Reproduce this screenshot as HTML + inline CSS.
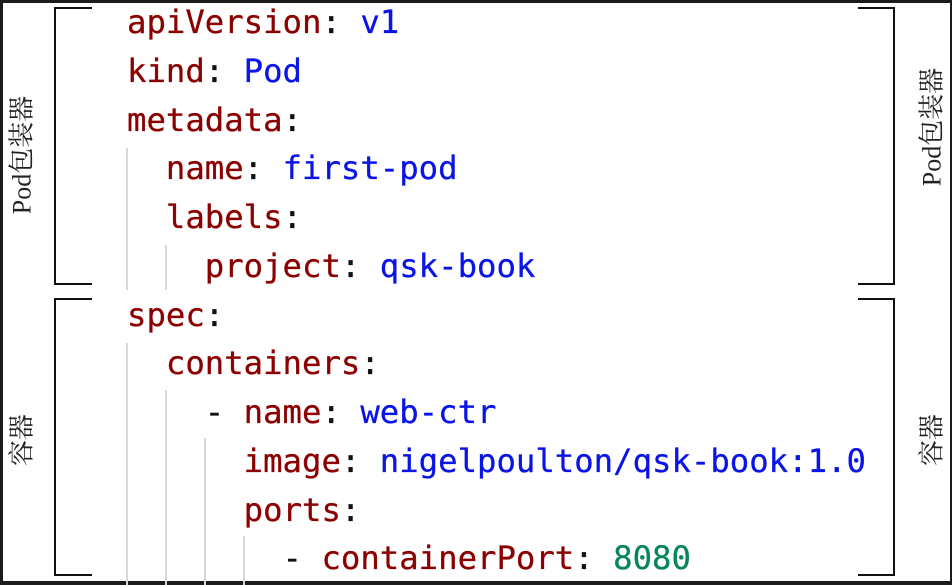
<!DOCTYPE html>
<html><head><meta charset="utf-8"><style>
html,body{margin:0;padding:0;}
body{width:952px;height:585px;background:#1c1c1c;position:relative;overflow:hidden;}
#pg{position:absolute;left:3px;top:3px;width:947px;height:578px;background:#fff;}
pre{position:absolute;left:127px;top:-2px;margin:0;font-family:"DejaVu Sans Mono","Liberation Mono",monospace;font-size:32.3px;line-height:48.75px;color:#111;-webkit-text-stroke:0.3px currentColor;}
.k{color:#8b0000}.v{color:#0a14e6}.n{color:#098658}
.g{position:absolute;width:2px;background:#d8d8d8;}
.br{position:absolute;border:2px solid #111;}
.lab{position:absolute;font-family:"Liberation Serif","Noto Serif CJK SC",serif;font-size:26px;color:#222;transform:translate(-50%,-50%) rotate(-90deg);white-space:nowrap;}
</style></head><body><div id="pg"></div>
<div class="g" style="left:126px;top:148px;height:142px"></div>
<div class="g" style="left:165px;top:245px;height:45px"></div>
<div class="g" style="left:126px;top:343px;height:242px"></div>
<div class="g" style="left:165px;top:390px;height:195px"></div>
<div class="g" style="left:204px;top:438px;height:147px"></div>
<div class="g" style="left:243px;top:536px;height:49px"></div>
<pre><span class="k">apiVersion</span>: <span class="v">v1</span>
<span class="k">kind</span>: <span class="v">Pod</span>
<span class="k">metadata</span>:
  <span class="k">name</span>: <span class="v">first-pod</span>
  <span class="k">labels</span>:
    <span class="k">project</span>: <span class="v">qsk-book</span>
<span class="k">spec</span>:
  <span class="k">containers</span>:
    - <span class="k">name</span>: <span class="v">web-ctr</span>
      <span class="k">image</span>: <span class="v">nigelpoulton/qsk-book:1.0</span>
      <span class="k">ports</span>:
        - <span class="k">containerPort</span>: <span class="n">8080</span></pre>
<div class="br" style="left:54px;top:7px;width:36px;height:274px;border-right:none"></div>
<div class="br" style="left:54px;top:298px;width:36px;height:274px;border-right:none"></div>
<div class="br" style="left:858px;top:7px;width:35px;height:274px;border-left:none"></div>
<div class="br" style="left:858px;top:298px;width:35px;height:274px;border-left:none"></div>
<div class="lab" style="left:20px;top:155px">Pod包装器</div>
<div class="lab" style="left:20px;top:440px">容器</div>
<div class="lab" style="left:930px;top:127px">Pod包装器</div>
<div class="lab" style="left:930px;top:440px">容器</div>
</body></html>
